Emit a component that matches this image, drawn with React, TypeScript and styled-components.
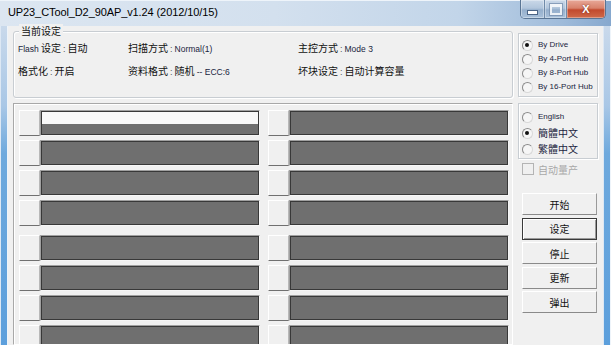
import React from 'react';
import styled, { createGlobalStyle, css } from 'styled-components';

const Global = createGlobalStyle`
  html, body { margin: 0; padding: 0; background: #ffffff; }
  body { width: 611px; height: 345px; overflow: hidden; }
`;

const CJK = `"Noto Sans CJK SC", "Liberation Sans", sans-serif`;
const LATIN = `"Liberation Sans", "Noto Sans CJK SC", sans-serif`;

const Window = styled.div`
  width: 611px;
  height: 345px;
  overflow: hidden;
  display: flex;
  flex-direction: column;
  background: #b9cfe6;
  font-family: ${LATIN};
  color: #111;
`;

const TitleBar = styled.div`
  height: 26px;
  flex: none;
  display: flex;
  align-items: flex-start;
  background: linear-gradient(90deg, #dce6f1 0%, #d3e0ee 45%, #c2d5e9 75%, #9fbbda 92%, #86a8ce 100%);
  box-shadow: inset 0 1px 0 #eef4fa;
`;

const Title = styled.div`
  font-family: ${LATIN};
  font-size: 11px;
  line-height: 12px;
  padding: 6px 0 0 8px;
  color: #000;
  flex: 1;
  letter-spacing: -0.1px;
`;

const Caption = styled.div`
  display: flex;
  margin-right: 5px;
  border: 1px solid #5a7594;
  border-top: none;
  border-radius: 0 0 5px 5px;
  overflow: hidden;
  height: 18px;
`;

const CapBtn = styled.div<{ $w: number; $close?: boolean }>`
  width: ${(p) => p.$w}px;
  height: 18px;
  display: flex;
  align-items: center;
  justify-content: center;
  color: #fff;
  font-size: 11px;
  font-weight: bold;
  font-family: ${LATIN};
  text-shadow: 0 0 2px #6a2a1a;
  border-left: 1px solid #6f8aa8;
  background: ${(p) =>
    p.$close
      ? 'linear-gradient(180deg, #e8a898 0%, #d8826c 45%, #c24a2e 55%, #cf6a4a 100%)'
      : 'linear-gradient(180deg, #cad8e8 0%, #b2c6dc 45%, #95afcc 55%, #a9c1da 100%)'};
  box-shadow: inset 0 0 0 1px rgba(255, 255, 255, 0.35);
  &:first-child { border-left: none; }
`;

const MinGlyph = styled.span`
  width: 9px;
  height: 3px;
  background: #fff;
  border: 1px solid #4c6586;
  margin-top: 6px;
`;

const MaxGlyph = styled.span`
  width: 8px;
  height: 6px;
  border: 2px solid #fff;
  border-top-width: 3px;
  outline: 1px solid #7a92b0;
  opacity: 0.8;
`;

const Body = styled.div`
  flex: 1;
  display: flex;
  min-height: 0;
`;

const SideFrame = styled.div`
  width: 8px;
  flex: none;
  background: linear-gradient(180deg, #c9d9eb 0%, #a9c7e6 25%, #6ea9dd 40%, #5c9fdc 100%);
  box-shadow: inset 1px 0 0 #dde8f4, inset -1px 0 0 #eef4fa;
`;

const Client = styled.div`
  flex: 1;
  background: #f0f0f0;
  display: grid;
  grid-template-columns: 500px 80px;
  grid-template-rows: 67px 1fr;
  column-gap: 5px;
  row-gap: 5px;
  padding: 5px 5px 0 5px;
  min-height: 0;
`;

const GroupBox = styled.div`
  position: relative;
  border: 1px solid #c8cdd2;
  border-radius: 3px;
  box-shadow: inset 1px 1px 0 #fff, 1px 1px 0 #fff;
  font-family: ${CJK};
`;

const GroupLabel = styled.span`
  position: absolute;
  top: -8px;
  left: 5px;
  padding: 0 2px;
  background: #f0f0f0;
  font-size: 10px;
  line-height: 14px;
  color: #111;
`;

const InfoGrid = styled.div`
  display: grid;
  grid-template-columns: 110px 170px auto;
  grid-auto-rows: 23px;
  padding: 5px 0 0 4px;
  align-items: center;
`;

const Info = styled.div`
  font-family: ${CJK};
  font-size: 10px;
  line-height: 14px;
  white-space: nowrap;
  color: #111;
`;

const Small = styled.span`
  font-family: ${LATIN};
  font-size: 8.5px;
  color: #1a2540;
`;

const Sep = styled.span`
  font-family: ${LATIN};
  font-size: 9px;
  color: #555;
  margin: 0 2px;
`;

const RadioBox = styled.div`
  margin-top: 2px;
  height: 64px;
  border: 1px solid #c8cdd2;
  box-shadow: inset 1px 1px 0 #fff, 1px 1px 0 #fff;
  display: flex;
  flex-direction: column;
  padding: 4px 0 0 3px;
  box-sizing: border-box;
`;

const RadioRow = styled.div<{ $h: number }>`
  display: flex;
  align-items: center;
  height: ${(p) => p.$h}px;
  gap: 5px;
`;

const RadioDot = styled.span<{ $on?: boolean }>`
  position: relative;
  width: 9px;
  height: 9px;
  flex: none;
  border-radius: 50%;
  border: 1px solid;
  border-color: #8a8a8a #d8d8d8 #d8d8d8 #8a8a8a;
  background: #f6f6f6;
  ${(p) =>
    p.$on &&
    css`
      &::after {
        content: '';
        position: absolute;
        left: 2px;
        top: 2px;
        width: 4px;
        height: 4px;
        border-radius: 50%;
        background: #111;
      }
    `}
`;

const RadioText = styled.span<{ $cjk?: boolean }>`
  font-family: ${(p) => (p.$cjk ? CJK : LATIN)};
  font-size: ${(p) => (p.$cjk ? '10px' : '8px')};
  line-height: 12px;
  color: #1a2540;
  white-space: nowrap;
`;

const Panel = styled.div`
  border: 1px solid;
  border-color: #a8a8a8 #ffffff #ffffff #a8a8a8;
  box-shadow: inset 1px 1px 0 #ffffff;
  padding: 6px 0 0 5px;
  display: flex;
  flex-direction: column;
  gap: 9px;
  min-height: 0;
  overflow: hidden;
`;

const SlotGroup = styled.div`
  display: flex;
  flex-direction: column;
  gap: 4px;
`;

const SlotRow = styled.div`
  display: flex;
  gap: 8px;
  height: 26px;
  flex: none;
`;

const Slot = styled.div`
  display: flex;
  height: 26px;
`;

const SlotBtn = styled.div`
  width: 21px;
  box-sizing: border-box;
  border: 1px solid;
  border-color: #ffffff #b8b8b8 #707070 #ffffff;
  background: #f0f0f0;
`;

const Bar = styled.div`
  width: 220px;
  box-sizing: border-box;
  border: 1px solid;
  border-color: #a0a0a0 #f6f6f6 #f6f6f6 #a0a0a0;
  box-shadow: inset 0 0 0 1px #383838;
  background: #6f6f6f;
  position: relative;
  overflow: hidden;
`;

const BarWhite = styled.div`
  position: absolute;
  left: 1px;
  right: 1px;
  top: 1px;
  height: 12px;
  background: #f8f8f8;
`;

const SideCol = styled.div`
  display: flex;
  flex-direction: column;
`;

const LangBox = styled.div`
  height: 56px;
  box-sizing: border-box;
  border: 1px solid #c8cdd2;
  box-shadow: inset 1px 1px 0 #fff, 1px 1px 0 #fff;
  display: flex;
  flex-direction: column;
  padding: 5px 0 0 3px;
`;

const CheckRow = styled.div`
  display: flex;
  align-items: center;
  gap: 4px;
  height: 18px;
  margin: 1px 0 0 4px;
`;

const CheckBox = styled.span`
  width: 10px;
  height: 10px;
  border: 1px solid #b4b4b4;
  background: #f0f0f0;
  flex: none;
`;

const CheckText = styled.span`
  font-family: ${CJK};
  font-size: 10px;
  color: #a8a8a8;
`;

const Buttons = styled.div`
  display: flex;
  flex-direction: column;
  gap: 2.5px;
  margin: 15px 0 0 4px;
`;

const Btn = styled.div<{ $default?: boolean }>`
  width: 75px;
  height: 22px;
  box-sizing: border-box;
  display: flex;
  align-items: center;
  justify-content: center;
  font-family: ${CJK};
  font-size: 10px;
  color: #111;
  background: #f0f0f0;
  border: 1px solid;
  border-color: #ffffff #9a9a9a #8a8a8a #ffffff;
  ${(p) =>
    p.$default &&
    css`
      border-color: #3a3a3a;
      box-shadow: inset 1px 1px 0 #ffffff, inset -1px -1px 0 #9a9a9a;
    `}
`;

const info: { label: string; value: string; small?: boolean }[] = [
  { label: 'Flash 设定', value: '自动' },
  { label: '扫描方式', value: 'Normal(1)', small: true },
  { label: '主控方式', value: 'Mode 3', small: true },
  { label: '格式化', value: '开启' },
  { label: '资料格式', value: '随机 -- ECC:6' },
  { label: '坏块设定', value: '自动计算容量' },
];

const slotGroups = [
  [0, 1, 2, 3],
  [4, 5, 6, 7],
];

function renderLabel(label: string) {
  if (label.startsWith('Flash')) {
    return (
      <>
        <Small>Flash</Small> 设定
      </>
    );
  }
  return label;
}

function renderValue(v: string, small?: boolean) {
  if (small) return <Small>{v}</Small>;
  if (v.includes('ECC')) {
    return (
      <>
        随机 <Small>-- ECC:6</Small>
      </>
    );
  }
  return v;
}

export default function App() {
  return (
    <>
      <Global />
      <Window>
        <TitleBar>
          <Title>UP23_CTool_D2_90AP_v1.24 (2012/10/15)</Title>
          <Caption>
            <CapBtn $w={23}>
              <MinGlyph />
            </CapBtn>
            <CapBtn $w={21}>
              <MaxGlyph />
            </CapBtn>
            <CapBtn $w={38} $close>
              X
            </CapBtn>
          </Caption>
        </TitleBar>
        <Body>
          <SideFrame />
          <Client>
            <GroupBox>
              <GroupLabel>当前设定</GroupLabel>
              <InfoGrid>
                {info.map((it, i) => (
                  <Info key={i}>
                    {renderLabel(it.label)}
                    <Sep>:</Sep>
                    {renderValue(it.value, it.small)}
                  </Info>
                ))}
              </InfoGrid>
            </GroupBox>
            <RadioBox>
              {['By Drive', 'By 4-Port Hub', 'By 8-Port Hub', 'By 16-Port Hub'].map((t, i) => (
                <RadioRow key={t} $h={14}>
                  <RadioDot $on={i === 0} />
                  <RadioText>{t}</RadioText>
                </RadioRow>
              ))}
            </RadioBox>
            <Panel>
              {slotGroups.map((g, gi) => (
                <SlotGroup key={gi}>
                  {g.map((r) => (
                    <SlotRow key={r}>
                      {[0, 1].map((c) => (
                        <Slot key={c}>
                          <SlotBtn />
                          <Bar>{r === 0 && c === 0 && <BarWhite />}</Bar>
                        </Slot>
                      ))}
                    </SlotRow>
                  ))}
                </SlotGroup>
              ))}
            </Panel>
            <SideCol>
              <LangBox>
                {[
                  { t: 'English', cjk: false },
                  { t: '簡體中文', cjk: true },
                  { t: '繁體中文', cjk: true },
                ].map((l, i) => (
                  <RadioRow key={l.t} $h={16}>
                    <RadioDot $on={i === 1} />
                    <RadioText $cjk={l.cjk}>{l.t}</RadioText>
                  </RadioRow>
                ))}
              </LangBox>
              <CheckRow>
                <CheckBox />
                <CheckText>自动量产</CheckText>
              </CheckRow>
              <Buttons>
                <Btn>开始</Btn>
                <Btn $default>设定</Btn>
                <Btn>停止</Btn>
                <Btn>更新</Btn>
                <Btn>弹出</Btn>
              </Buttons>
            </SideCol>
          </Client>
          <SideFrame />
        </Body>
      </Window>
    </>
  );
}
